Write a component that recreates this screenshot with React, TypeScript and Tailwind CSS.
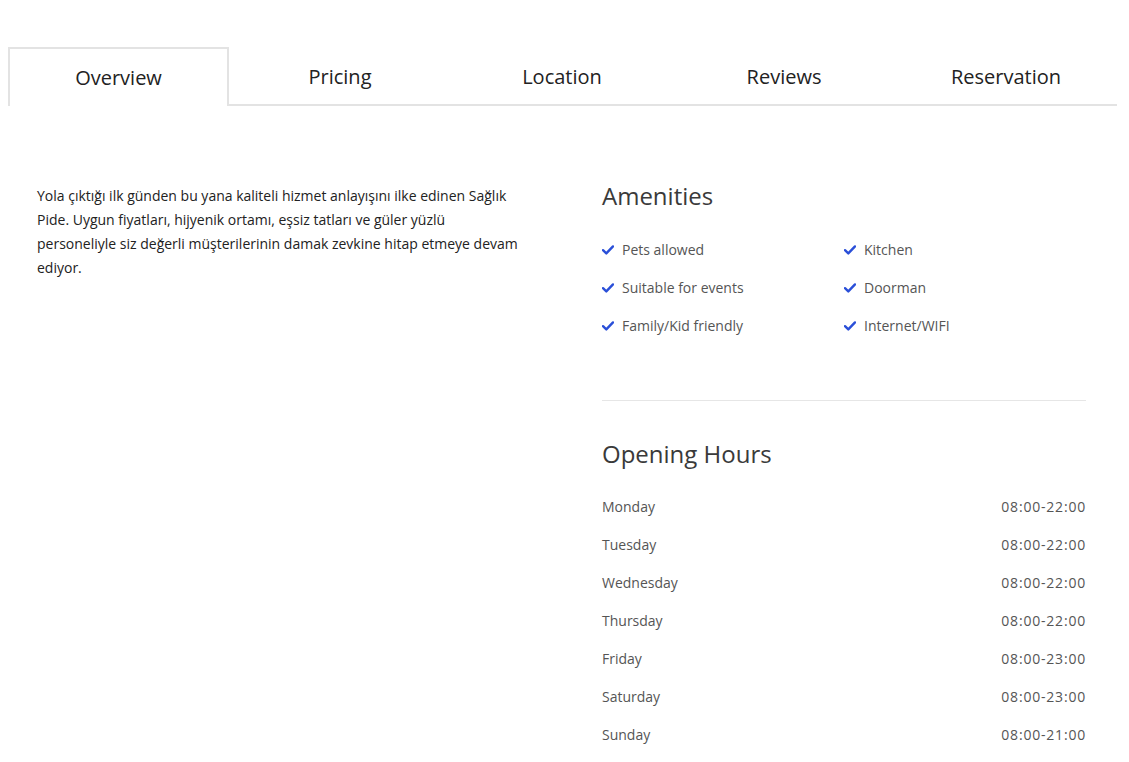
import React from 'react'

const tabs = ['Overview', 'Pricing', 'Location', 'Reviews', 'Reservation']

const amenities = [
  'Pets allowed',
  'Kitchen',
  'Suitable for events',
  'Doorman',
  'Family/Kid friendly',
  'Internet/WIFI',
]

const hours = [
  ['Monday', '08:00-22:00'],
  ['Tuesday', '08:00-22:00'],
  ['Wednesday', '08:00-22:00'],
  ['Thursday', '08:00-22:00'],
  ['Friday', '08:00-23:00'],
  ['Saturday', '08:00-23:00'],
  ['Sunday', '08:00-21:00'],
]

function Check() {
  return (
    <svg width="12" height="10" viewBox="0 0 12 10" className="shrink-0">
      <path d="M1 5.2 L4.3 8.4 L11 1.4" fill="none" stroke="#2a4fd8" strokeWidth="2.4" strokeLinecap="round" strokeLinejoin="round" />
    </svg>
  )
}

export default function App() {
  return (
    <div className="min-h-screen bg-white pt-[47px] text-[#333]" style={{ fontFamily: '"Open Sans", "Noto Sans", sans-serif' }}>
      {/* tabs */}
      <div className="ml-[8px] flex">
        {tabs.map((t, i) => (
          <div
            key={t}
            className={
              i === 0
                ? 'flex h-[59px] w-[221px] shrink-0 items-center justify-center border-x-2 border-t-2 border-[#e3e3e3] text-[20px] text-[#222]'
                : 'flex h-[59px] w-[222px] shrink-0 items-center justify-center border-b-2 border-[#e3e3e3] pt-[2px] text-[20px] text-[#222]'
            }
          >
            {t}
          </div>
        ))}
      </div>

      <div className="flex pt-[78px]">
        {/* description */}
        <div className="ml-[37px] w-[528px]">
          <p className="text-[14px] leading-[24px] text-[#222]">
            Yola çıktığı ilk günden bu yana kaliteli hizmet anlayışını ilke edinen Sağlık
            <br />
            Pide. Uygun fiyatları, hijyenik ortamı, eşsiz tatları ve güler yüzlü
            <br />
            personeliyle siz değerli müşterilerinin damak zevkine hitap etmeye devam
            <br />
            ediyor.
          </p>
        </div>

        {/* right column */}
        <div className="ml-[37px] -mt-[4px] w-[484px]">
          <h3 className="text-[24px] leading-[32px] text-[#3a3a3a]">Amenities</h3>
          <div className="mt-[28px] grid grid-cols-2 gap-y-[19px]">
            {amenities.map((a) => (
              <div key={a} className="flex items-center gap-[8px] text-[14px] leading-[19px] text-[#555]">
                <Check />
                <span>{a}</span>
              </div>
            ))}
          </div>

          <div className="mt-[65px] border-t border-[#e6e6e6]" />

          <h3 className="mt-[37px] text-[24px] leading-[32px] text-[#3a3a3a]">Opening Hours</h3>
          <div className="mt-[27px] flex flex-col gap-[19px]">
            {hours.map(([d, h]) => (
              <div key={d} className="flex justify-between text-[14px] leading-[19px] text-[#555]">
                <span>{d}</span>
                <span className="tracking-[0.8px]">{h}</span>
              </div>
            ))}
          </div>
        </div>
      </div>
    </div>
  )
}
